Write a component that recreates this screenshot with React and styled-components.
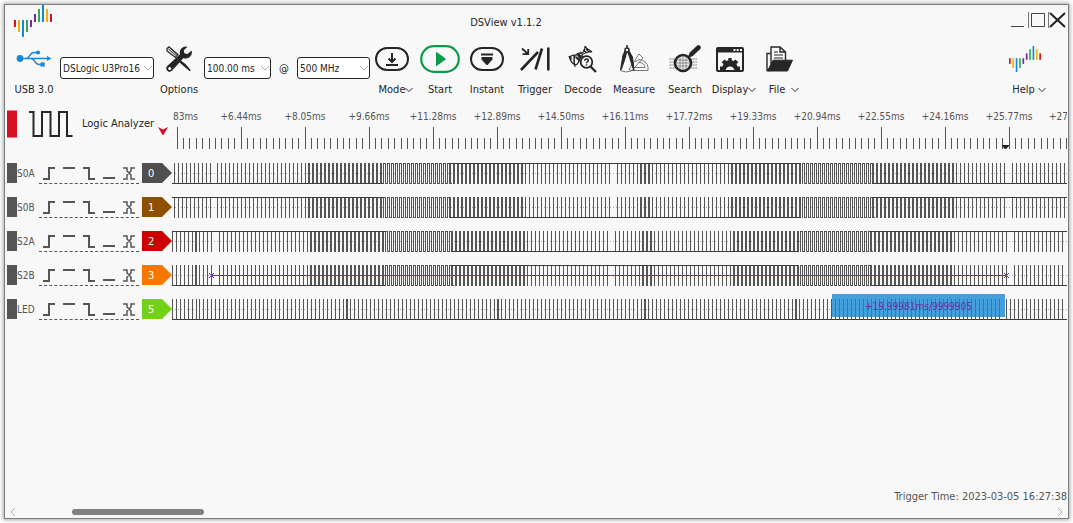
import React from 'react';
import styled, { createGlobalStyle } from 'styled-components';

const GlobalStyle = createGlobalStyle`
  * { box-sizing: border-box; }
  body {
    margin: 0;
    background: #fff;
    color: #262626;
    font: 11px/16px "DejaVu Sans Condensed", "DejaVu Sans", sans-serif;
  }
  button, select { font: inherit; color: inherit; }
`;

const Desktop = styled.div`
  padding: 4px;
  min-height: 100vh;
  display: flex;
`;

const Window = styled.main`
  flex: 1;
  min-width: 0;
  display: flex;
  flex-direction: column;
  background: #f8f8f8;
  border: 1px solid #7d7d7d;
  box-shadow: 0 0 4px 1px rgba(0, 0, 0, 0.35);
`;

const TitleBar = styled.header`
  display: grid;
  grid-template-columns: 94px 1fr 64px;
  padding-right: 1px;
  height: 34px;
`;

const LogoBox = styled.div`
  padding-left: 9px;
  svg { display: block; }
`;

const Title = styled.h1`
  margin: 0;
  padding-right: 90px;
  font-size: 11px;
  font-weight: 400;
  line-height: 36px;
  text-align: center;
`;

const WindowControls = styled.div`
  display: flex;
  align-items: center;
  justify-content: flex-end;
  height: 30px;
`;

const WindowButton = styled.button`
  width: 20px;
  height: 20px;
  padding: 0;
  border: 0;
  background: none;
  svg { display: block; }
`;

const Toolbar = styled.nav`
  display: flex;
  align-items: stretch;
  height: 66px;
  padding: 0 7px 0 4px;
`;

const ToolButton = styled.button`
  display: flex;
  flex-direction: column;
  align-items: center;
  flex: none;
  width: ${(p) => p.$w}px;
  margin-left: ${(p) => (p.$end ? 'auto' : 0)};
  padding: 4px 0 0;
  border: 0;
  background: none;
`;

const ToolIcon = styled.span`
  display: flex;
  align-items: center;
  justify-content: center;
  height: 32px;
  margin-bottom: 7px;
  padding-right: ${(p) => (p.$menu ? 8 : 0)}px;
`;

const ToolLabel = styled.span`
  display: flex;
  align-items: center;
  white-space: nowrap;
  svg { margin-left: ${(p) => p.$gap || 0}px; }
`;

const Combo = styled.label`
  position: relative;
  align-self: flex-start;
  flex: none;
  width: ${(p) => p.$w}px;
  margin-top: 18px;
  margin-left: ${(p) => p.$ml || 0}px;
`;

const Select = styled.select`
  display: block;
  appearance: none;
  width: 100%;
  height: 22px;
  margin: 0;
  padding: 2px 12px 0 2px;
  border: 1px solid #262626;
  border-radius: 3px;
  background: #fff;
  font-size: 10px;
  line-height: 18px;
`;

const ComboArrow = styled.svg`
  position: absolute;
  right: 1px;
  top: 8px;
  pointer-events: none;
`;

const At = styled.span`
  width: 26px;
  margin-top: 22px;
  text-align: center;
`;

const Analyzer = styled.section`
  color: #555;
  padding-right: 1px;
`;

const Lane = styled.div`
  position: relative;
  display: grid;
  grid-template-columns: 167px 1fr;
  height: ${(p) => p.$h}px;
`;

const LaneHead = styled.div`
  display: flex;
  align-items: center;
  padding-left: 2px;
`;

const DeviceHead = styled(LaneHead)`
  padding-bottom: 14px;
`;

const Plot = styled.div`
  position: relative;
  min-width: 0;
  overflow: hidden;
`;

const PlotSvg = styled.svg`
  display: block;
  width: 100%;
  height: 100%;
  font-size: 10px;
`;

const DeviceMark = styled.span`
  width: 10px;
  height: 28px;
  margin-right: 12px;
  background: #d90f26;
  border: solid #e9808c;
  border-width: 1px 0;
`;

const DeviceName = styled.span`
  width: 76px;
  margin-left: 9px;
  color: #262626;
  white-space: nowrap;
`;

const DeviceArrow = styled.svg`
  flex: none;
  margin-top: 14px;
`;

const Handle = styled.span`
  width: 10px;
  height: 20px;
  background: #555;
`;

const ChannelName = styled.span`
  width: 22px;
  padding-top: 2px;
  font-size: 10px;
`;

const Triggers = styled.div`
  display: flex;
  height: 21px;
  margin-right: 3px;
  border-bottom: 1px dashed #555;
`;

const TriggerButton = styled.button`
  width: 20px;
  height: 20px;
  padding: 0;
  border: 0;
  background: none;
  svg { display: block; }
`;

const Tag = styled.span`
  width: 30px;
  height: 20px;
  padding-left: 6px;
  background: ${(p) => p.$color};
  clip-path: polygon(0 0, 20px 0, 100% 50%, 20px 100%, 0 100%);
  color: #fff;
  line-height: 22px;
`;

const Measurement = styled.div`
  position: absolute;
  left: 660px;
  top: 2px;
  width: 173px;
  height: 23px;
  background: rgba(24, 136, 212, 0.8);
  color: #6a30a5;
  font-size: 10px;
  line-height: 26px;
  text-align: center;
`;

const Footer = styled.footer`
  margin-top: auto;
`;

const TriggerTime = styled.p`
  margin: 0 1px 0 0;
  color: #555;
  text-align: right;
`;

const ScrollBar = styled.div`
  display: flex;
  align-items: center;
  height: 13px;
  padding: 0 4px;
`;

const ScrollButton = styled.button`
  width: 8px;
  height: 10px;
  padding: 0;
  border: 0;
  background: none;
  svg { display: block; }
`;

const ScrollTrack = styled.div`
  flex: 1;
  padding-left: 55px;
`;

const ScrollThumb = styled.div`
  width: 132px;
  height: 6px;
  border-radius: 3px;
  background: #808080;
`;

/* ---------- icons ---------- */

const BARS = [
  ['#d90f26', 15, 7], ['#f5b30a', 15, 12], ['#1687d9', 15, 17], ['#35a853', 15, 12], ['#6b2fa0', 15, 7],
  ['#6b2fa0', 9, 8], ['#35a853', 4, 13], ['#1687d9', 0, 17], ['#f5b30a', 4, 13], ['#d90f26', 9, 8],
];

const Logo = ({ width, height }) => (
  <svg width={width} height={height} viewBox="0 0 38 32" preserveAspectRatio="none" aria-hidden="true">
    {BARS.map(([c, y, h], i) => <rect key={i} x={i * 4} y={y} width="2" height={h} fill={c} />)}
  </svg>
);

const Chevron = ({ color = '#333' }) => (
  <svg width="8" height="6" viewBox="0 0 8 6" fill="none" stroke={color} aria-hidden="true">
    <path d="M.5 1 4 4.6 7.5 1" />
  </svg>
);

const UsbIcon = () => (
  <svg width="36" height="20" viewBox="0 0 36 20" fill="none" stroke="#1687d9" strokeWidth="1.5">
    <circle cx="4" cy="9.500" r="3.400" fill="#1687d9" stroke="none" />
    <path d="M4 9.500H33M10 9.500C14 9.500 13.500 3.500 18 3.500H22M15 9.500C19 9.500 18.500 15.500 23 15.500H27" />
    <path d="M31 7 35.500 9.500 31 12z" fill="#1687d9" stroke="none" />
    <circle cx="22" cy="3.500" r="2.100" fill="#1687d9" stroke="none" />
    <rect x="24.500" y="13.400" width="4.200" height="4.200" fill="#1687d9" stroke="none" />
  </svg>
);

const OptionsIcon = () => (
  <svg width="26" height="26" viewBox="0 0 26 26">
    <path d="M1 2.500 3 .800 12 8.500 9.500 11.500 1 5z" fill="#ddd" stroke="#262626" strokeWidth="1.200" />
    <path d="M2.500 3 10 9.500M4 2 11 8.500" stroke="#262626" strokeWidth=".8" />
    <path d="M14 14 19.500 18 25 24.500 23.500 25 17.500 20 12.500 15.500z" fill="#262626" />
    <path fill="#262626" fillRule="evenodd" d="M21.500.800A6 6 0 0 0 14 8.200L1.200 20a3.400 3.400 0 0 0 4.800 4.800L17.500 12A6 6 0 0 0 25.500 4.500L21.500 8 18.300 7.200 17.800 4.200zM3.700 20.900a1.500 1.500 0 1 1 0 3 1.500 1.500 0 0 1 0-3z" />
  </svg>
);

const ModeIcon = () => (
  <svg width="34" height="24" viewBox="0 0 34 24" fill="none" stroke="#262626" strokeWidth="2">
    <rect x="1" y="1" width="32" height="22" rx="11" />
    <path d="M17 6V14.500M13.500 11.500 17 15 20.500 11.500M11 18H23" />
  </svg>
);

const StartIcon = () => (
  <svg width="40" height="28" viewBox="0 0 40 28">
    <rect x="1.200" y="1.200" width="37.600" height="25.600" rx="12.800" fill="none" stroke="#0a9b4a" strokeWidth="2.200" />
    <path d="M16 7.500Q16 6.500 17 7.200L25.500 13.400Q26.200 14 25.500 14.600L17 20.800Q16 21.500 16 20.500z" fill="#0a9b4a" />
  </svg>
);

const InstantIcon = () => (
  <svg width="34" height="24" viewBox="0 0 34 24">
    <rect x="1" y="1" width="32" height="22" rx="11" fill="none" stroke="#262626" strokeWidth="2" />
    <path d="M11 6.500H23V8.500H11zM11.500 10H22.500V12.500L17.500 18H16.500L11.500 12.500z" fill="#262626" />
  </svg>
);

const TriggerIcon = () => (
  <svg width="30" height="24" viewBox="0 0 30 24" fill="none" stroke="#262626">
    <path d="M2 1.500 8 7M8.200 2V7.200H2.500" strokeWidth="1.800" />
    <path d="M1 23 18 5M15.500 22.500 22 1.500M28.300 .500V23.500" strokeWidth="2.600" />
  </svg>
);

const DecodeIcon = () => (
  <svg width="30" height="28" viewBox="0 0 30 28" fill="none" stroke="#262626" strokeWidth="1.200">
    <path d="M1 11C4 21 9 22 11 16S16 6 24 7M1 12C10 7 14 12 17 12M17 1C17 10 13 7 9 9S6 17 7 22M17 1C19 5 22 5 24 7M3 12V15M6 11V19M9 9 12 14M12 7 15 10M15 5 19 8M18 4 21 7" />
    <path d="M10 8 13 13M8 12 12 16" strokeWidth="2" />
    <circle cx="18.500" cy="17" r="5.800" fill="#f8f8f8" strokeWidth="1.800" />
    <path d="M22.500 21.500 28 27" strokeWidth="2.200" />
    <path d="M16.700 15.800C16.700 13.200 20.500 13.400 20.300 15.600 20.200 16.800 18.500 16.800 18.500 18.300M18.500 19.200V20.600" strokeWidth="1.500" />
  </svg>
);

const MeasureIcon = () => (
  <svg width="30" height="28" viewBox="0 0 30 28" fill="none" stroke="#777">
    <path d="M10 24.500 20 9 24 13 13 25.500zM16 17 20 14.500Q28 16 29 22V25.500H12.500M15.500 22.500H26Q25 17 19.500 17.500" />
    <path d="M1 25.500Q7 28.500 14 25.500" />
    <path d="M8 5 6.500 12 2.500 24 1.500 25 4 10 6.500 5zM8 5 10.500 12 13.500 22 15 25.500 13.500 12 9.500 5z" fill="#262626" stroke="#262626" />
    <circle cx="8" cy="5" r="2" fill="#f8f8f8" stroke="#262626" strokeWidth="1.500" />
    <path d="M8 0V3" stroke="#262626" strokeWidth="1.500" />
  </svg>
);

const SearchIcon = () => (
  <svg width="32" height="28" viewBox="0 0 32 28" fill="none" stroke="#262626">
    <path d="M0 14H28M0 17H28M0 20H28M0 23H28M2 13V25M5 13V25M24 13V25M27 13V25" stroke="#aaa" strokeDasharray="2 1" />
    <circle cx="14" cy="18" r="8" fill="#eee" strokeWidth="2.600" />
    <path d="M8 15H20M7.500 18H20.500M8 21H20M11 12V24M14 11V25M17 12V24" stroke="#777" strokeWidth=".8" />
    <path d="M19.500 12 22.500 9.500" strokeWidth="2.500" />
    <path d="M22.500 9 29.500 2.500" strokeWidth="4.500" strokeLinecap="round" />
  </svg>
);

const DisplayIcon = () => (
  <svg width="28" height="25" viewBox="0 0 28 25">
    <rect x="1" y="1" width="26" height="23" rx="1" fill="none" stroke="#262626" strokeWidth="2" />
    <path d="M1 1H27V5.500H1z" fill="#262626" />
    <path d="M17.500 2H19.500V4H17.500zM20.700 2H22.700V4H20.700zM24 2H26V4H24z" fill="#f8f8f8" />
    <path fill="#262626" d="M4 24V19.500H6.500L7.500 17 5.700 15.200 8.500 12.500 10.500 14 12.300 13.200V11H15.700V13.200L17.500 14 19.500 12.500 22.300 15.200 20.500 17 21.500 19.500H24V24H18.500A4.500 4.500 0 0 0 9.500 24z" />
  </svg>
);

const FileIcon = () => (
  <svg width="28" height="26" viewBox="0 0 28 26" fill="none" stroke="#262626" strokeWidth="1.400">
    <path d="M4.500 7.500H1V24.500H4" />
    <path d="M5 18V1H14L19.500 6V14M14 1V6H19.500" />
    <path d="M8 6H12M8 9H17M8 12H17" strokeWidth="1" />
    <path d="M7 14.200H26.500L21.500 25H1.500Z" fill="#262626" strokeWidth="1" strokeLinejoin="round" />
  </svg>
);

const SquareWaveIcon = () => (
  <svg width="44" height="28" viewBox="0 0 44 28" fill="none" stroke="#262626" strokeWidth="2">
    <path d="M0 2H4.500V26H13V2H21.500V26H30V2H38V26H43.500" />
  </svg>
);

const TRIGGER_SHAPES = {
  rising: 'M4 16H10V5H16',
  high: 'M4 5H16',
  falling: 'M4 5H10V16H16',
  low: 'M4 15H16',
  either: 'M4 5H8V8L12 12V16H16M16 5H12V8L8 12V16H4',
};

/* ---------- waveform geometry, in plot pixels ---------- */

const bar = (x, w = 1) => `M${x} 7h${w}v21h-${w}z`;
const cap = (x, y, w) => `M${x} ${y}h${w}v1h-${w}z`;
const every = (from, to, step, w) => {
  let d = '';
  for (let x = from; x <= to; x += step) d += bar(x, w);
  return d;
};
const pulses = (from, to) => {
  let d = every(from, to, 2, 1);
  for (let x = from; x < to; x += 4) d += cap(x, 7, 3) + cap(x + 2, 27, 3);
  return d;
};

const FAST_A =
  every(2, 38, 4) + every(45, 133, 4) + every(136, 208, 4, 2) + pulses(211, 277) +
  every(277, 349, 4, 2) + every(353, 437, 4) + every(445, 465, 4) + every(468, 476, 4, 2) +
  every(480, 556, 4) + every(559, 627, 4, 2) + pulses(630, 700) + every(700, 780, 4, 2) +
  every(784, 832, 4) + every(840, 892, 4);
const FAST_B =
  every(0, 20, 4) + bar(23, 2) + every(27, 39, 4) + every(47, 135, 4) + every(138, 210, 4, 2) +
  pulses(213, 279) + every(279, 351, 4, 2) + every(355, 435, 4) + every(443, 467, 4) +
  every(470, 478, 4, 2) + every(482, 558, 4) + every(561, 625, 4, 2) + pulses(628, 698) +
  every(698, 778, 4, 2) + every(782, 834, 4) + every(842, 890, 4);
const STEADY =
  every(0, 24, 4) + every(27, 171, 4) + bar(174, 2) + every(178, 322, 4) + bar(325, 2) +
  every(329, 469, 4) + bar(472, 2) + every(476, 620, 4) + bar(623, 2) + every(627, 827, 4) +
  every(834, 892, 4);

const CHANNELS = [
  { name: 'S0A', index: 0, color: '#4f4f4f', wave: FAST_A, levels: [27, 7, 27], cuts: [211, 277, 629, 700] },
  { name: 'S0B', index: 1, color: '#8f4f00', wave: FAST_A, levels: [7, 27, 7], cuts: [211, 277, 629, 700] },
  { name: 'S2A', index: 2, color: '#cc0000', wave: FAST_B, levels: [7, 27, 7], cuts: [213, 279, 627, 698] },
  { name: 'S2B', index: 3, color: '#f57900', wave: FAST_B, levels: [27, 7, 27], cuts: [213, 279, 627, 698], span: true },
  { name: 'LED', index: 5, color: '#73d216', wave: STEADY, levels: [27], measurement: '+19.99981ms/9999905' },
];

const MAJOR = ['+6.44ms', '+8.05ms', '+9.66ms', '+11.28ms', '+12.89ms', '+14.50ms', '+16.11ms', '+17.72ms', '+19.33ms', '+20.94ms', '+22.55ms', '+24.16ms', '+25.77ms'];

const Ruler = () => (
  <PlotSvg fill="#555">
    <text x="1" y="15">83ms</text>
    {MAJOR.map((t, i) => <text key={t} x={69 + i * 64} y="15" textAnchor="middle">{t}</text>)}
    <text x="877" y="15">+27</text>
    {Array.from({ length: 140 }, (_, i) => {
      const major = i % 10 === 0;
      return <rect key={i} x={5 + Math.floor(i * 6.4)} y={major ? 22 : 33} width="1" height={major ? 22 : 11} />;
    })}
    <path d="M830 40H837V41L834 44H833L830 41z" fill="#222" />
  </PlotSvg>
);

const Wave = ({ channel }) => {
  const { levels, cuts, wave, span } = channel;
  return (
    <PlotSvg shapeRendering="crispEdges">
      <line x1="3" x2="100%" y1="17.500" y2="17.500" stroke="#aaa" strokeDasharray="1 2" />
      <path d={wave} fill="#555" />
      {cuts ? (
        <g fill="#3c3c3c">
          <rect x="0" y={levels[0]} width={cuts[0]} height="1" />
          <rect x={cuts[1]} y={levels[1]} width={cuts[2] - cuts[1]} height="1" />
          <rect x={cuts[3]} y={levels[2]} width="100%" height="1" />
        </g>
      ) : (
        <rect y={levels[0]} width="100%" height="1" fill="#3c3c3c" />
      )}
      {span && (
        <g stroke="#6a30a5">
          <path d="M39 17.500H834" />
          <path d="M37 15 42 20M37 20 42 15M832 15 837 20M832 20 837 15" />
        </g>
      )}
    </PlotSvg>
  );
};

const Tool = ({ label, icon, w, menu, gap, end }) => (
  <ToolButton type="button" $w={w} $end={end}>
    <ToolIcon $menu={menu}>{icon}</ToolIcon>
    <ToolLabel $gap={gap}>{label}{menu && <Chevron />}</ToolLabel>
  </ToolButton>
);

const Dropdown = ({ label, value, w, ml }) => (
  <Combo $w={w} $ml={ml}>
    <Select aria-label={label} defaultValue={value}>
      <option>{value}</option>
    </Select>
    <ComboArrow width="10" height="6" viewBox="0 0 10 6" fill="none" stroke="#aaa">
      <path d="M1 1 5 5 9 1" />
    </ComboArrow>
  </Combo>
);

export default function App() {
  return (
    <Desktop>
      <GlobalStyle />
      <Window>
        <TitleBar>
          <LogoBox><Logo width={38} height={32} /></LogoBox>
          <Title>DSView v1.1.2</Title>
          <WindowControls>
            <WindowButton type="button" aria-label="Minimize">
              <svg width="20" height="20" stroke="#444" fill="none"><path d="M4 16.500H17" /></svg>
            </WindowButton>
            <WindowButton type="button" aria-label="Maximize">
              <svg width="20" height="20" stroke="#444" fill="none"><path d="M1.500 2V18" stroke="#777" /><path d="M4.500 3.500H17.500V16.500H4.500z" /></svg>
            </WindowButton>
            <WindowButton type="button" aria-label="Close">
              <svg width="20" height="20" stroke="#222" fill="none"><path d="M1.500 2V18" stroke="#777" /><path d="M3 3 18 17M18 3 3 17" strokeWidth="2" /></svg>
            </WindowButton>
          </WindowControls>
        </TitleBar>

        <Toolbar>
          <Tool label="USB 3.0" icon={<UsbIcon />} w={50} />
          <Dropdown label="Device" value="DSLogic U3Pro16" w={94} ml={1} />
          <Tool label="Options" icon={<OptionsIcon />} w={50} />
          <Dropdown label="Duration" value="100.00 ms" w={67} />
          <At>@</At>
          <Dropdown label="Sample rate" value="500 MHz" w={73} />
          <Tool label="Mode" icon={<ModeIcon />} w={52} menu />
          <Tool label="Start" icon={<StartIcon />} w={36} />
          <Tool label="Instant" icon={<InstantIcon />} w={58} />
          <Tool label="Trigger" icon={<TriggerIcon />} w={38} />
          <Tool label="Decode" icon={<DecodeIcon />} w={58} />
          <Tool label="Measure" icon={<MeasureIcon />} w={44} />
          <Tool label="Search" icon={<SearchIcon />} w={58} />
          <Tool label="Display" icon={<DisplayIcon />} w={40} menu />
          <Tool label="File" icon={<FileIcon />} w={60} menu gap={6} />
          <Tool label="Help" icon={<Logo width={32} height={26} />} w={64} menu gap={3} end />
        </Toolbar>

        <Analyzer>
          <Lane $h={51}>
            <DeviceHead>
              <DeviceMark />
              <SquareWaveIcon />
              <DeviceName>Logic Analyzer</DeviceName>
              <DeviceArrow width="10" height="8" aria-hidden="true">
                <path d="M0 0 5 2.500 10 0 5.500 8H4.500z" fill="#d90f26" />
              </DeviceArrow>
            </DeviceHead>
            <Plot><Ruler /></Plot>
          </Lane>
          {CHANNELS.map((c) => (
            <Lane key={c.name} $h={34}>
              <LaneHead>
                <Handle />
                <ChannelName>{c.name}</ChannelName>
                <Triggers>
                  {Object.entries(TRIGGER_SHAPES).map(([k, d]) => (
                    <TriggerButton key={k} type="button" aria-label={`${c.name} ${k}`}>
                      <svg width="20" height="20" fill="none" stroke="#555" strokeWidth={k === 'either' ? 1.5 : 2}><path d={d} /></svg>
                    </TriggerButton>
                  ))}
                </Triggers>
                <Tag $color={c.color}>{c.index}</Tag>
              </LaneHead>
              <Plot>
                <Wave channel={c} />
                {c.measurement && <Measurement>{c.measurement}</Measurement>}
              </Plot>
            </Lane>
          ))}
        </Analyzer>

        <Footer>
          <TriggerTime>Trigger Time: 2023-03-05 16:27:38</TriggerTime>
          <ScrollBar>
            <ScrollButton type="button" aria-label="Scroll left">
              <svg width="8" height="10" fill="none" stroke="#aaa"><path d="M6 1 2 5 6 9" /></svg>
            </ScrollButton>
            <ScrollTrack><ScrollThumb /></ScrollTrack>
            <ScrollButton type="button" aria-label="Scroll right">
              <svg width="8" height="10" fill="none" stroke="#aaa"><path d="M2 1 6 5 2 9" /></svg>
            </ScrollButton>
          </ScrollBar>
        </Footer>
      </Window>
    </Desktop>
  );
}
